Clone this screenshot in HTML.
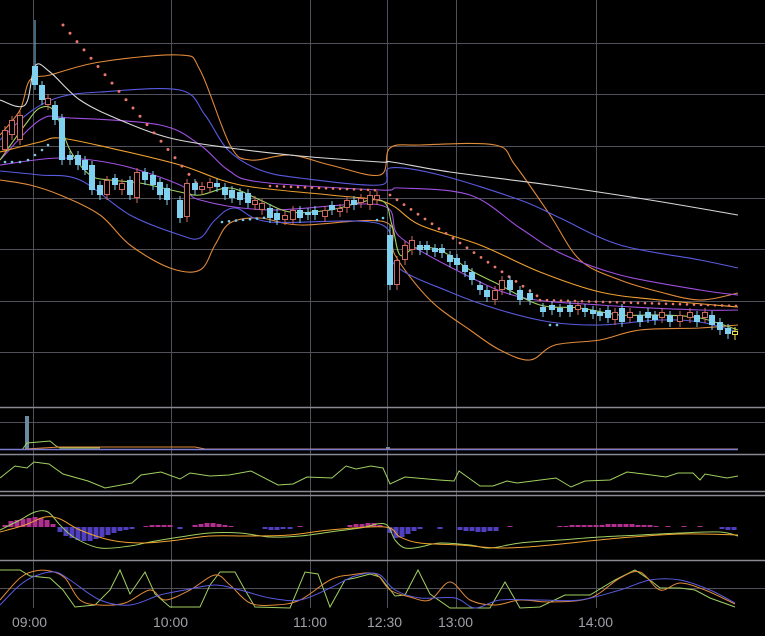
<!DOCTYPE html>
<html><head><meta charset="utf-8"><style>
html,body{margin:0;padding:0;background:#000;width:765px;height:636px;overflow:hidden}
svg{display:block}
text{font-family:"Liberation Sans",sans-serif;font-size:14px;fill:#a0a0a8}
</style></head><body>
<svg id="s" width="765" height="636" viewBox="0 0 765 636" xmlns="http://www.w3.org/2000/svg">
<g stroke="#50505a" stroke-width="1" fill="none">
<path d="M0 43.5H765M0 94.5H765M0 146.5H765M0 198.5H765M0 249.5H765M0 301.5H765M0 352.5H765"/>
<path d="M33.5 0V608M171.5 0V608M310.5 0V608M387.5 0V608M456.5 0V608M596.5 0V608"/>
<path d="M0 422.5H765M0 588.5H765"/>
</g>
<g stroke="#8a8a94" stroke-width="1.5" fill="none">
<path d="M0 407.5H765M0 454.5H765M0 491.5H765M0 495.5H765M0 560.5H765"/>
</g>
<g fill="none" stroke-width="1.1">
<polyline class="sm" stroke="#e08a3a" points="0,135 20,110 30,80 50,75 100,62 180,55 200,70 230,145 250,160 290,155 330,165 380,175 390,148 420,145 495,145 515,165 550,215 580,260 620,280 660,292 700,300 738,293"/>
<polyline class="sm" stroke="#e08a3a" points="0,180 30,185 60,195 100,215 130,245 170,268 200,270 215,245 230,223 260,218 300,225 385,222 395,255 430,300 470,330 500,350 530,360 555,345 600,340 640,330 700,328 738,325"/>
<polyline class="sm" stroke="#5a5ae0" points="0,140 30,112 60,97 100,92 180,90 205,115 228,150 260,170 300,178 380,185 390,168 440,175 520,200 560,218 620,245 700,260 738,268"/>
<polyline class="sm" stroke="#5a5ae0" points="0,171 40,175 80,180 130,215 180,235 200,238 215,220 235,208 270,222 380,224 395,265 450,292 500,310 550,322 600,325 660,320 700,322 738,332"/>
<polyline class="sm" stroke="#a050e0" points="0,160 40,120 70,118 160,125 200,145 228,170 260,182 380,190 400,188 470,195 520,228 560,253 620,275 700,290 738,295"/>
<polyline class="sm" stroke="#a050e0" points="0,165 60,158 120,165 180,185 200,200 270,210 380,205 400,237 460,272 520,297 600,305 700,310 738,310"/>
<polyline class="sm" stroke="#d8d8d8" points="0,100 25,105 35,66 50,72 80,100 120,120 170,138 230,148 300,156 380,162 392,162 450,172 550,185 650,200 738,215"/>
<polyline class="sm" stroke="#f0a030" points="0,152 40,142 60,138 110,148 180,165 240,185 330,195 385,202 420,225 480,245 540,272 600,292 660,300 738,307"/>
<polyline class="sm" stroke="#a0d060" points="0,160 25,125 40,108 55,112 70,150 90,175 110,180 140,183 180,192 200,195 230,188 260,200 290,212 330,210 380,200 392,225 400,255 415,248 440,250 470,270 500,285 540,305 580,308 620,315 660,315 700,318 738,330"/>
</g>
<g id="dots" fill="#e8786a"></g>
<g id="bdots" fill="#7ac8e8"></g>
<g id="cand"></g>
<g id="hist"></g>
<rect x="25" y="416" width="4" height="34" fill="#6a8aa0"/>
<rect x="386" y="447" width="4" height="3" fill="#6a8aa0"/>
<polyline fill="none" stroke="#a0d060" stroke-width="1" points="22,450 27,443 50,441 56,446 60,448 100,448"/>
<polyline fill="none" stroke="#e08a3a" stroke-width="1" points="25,449 60,447 195,447 205,449 738,449"/>
<path d="M0 449.5H738" stroke="#7a7ad0" stroke-width="1.5"/>
<polyline fill="none" stroke="#a0d060" stroke-width="1" points="0,478 15,466 27,468 34,462 49,464 63,474 88,481 105,488 132,483 141,475 161,472 180,479 190,473 210,476 229,475 251,471 278,485 293,484 307,477 332,478 346,466 356,469 371,466 383,468 390,484 405,477 439,480 454,481 459,471 480,486 493,486 507,481 517,483 556,478 571,487 585,481 610,480 627,472 644,474 666,477 678,473 693,473 700,480 705,474 727,478 738,476"/>
<polyline class="sm" fill="none" stroke="#a0d060" stroke-width="1" points="0,530 20,520 35,512 48,512 60,525 75,538 100,548 130,546 150,542 180,537 210,533 240,533 270,537 300,536 330,532 360,528 385,524 395,540 405,548 420,547 440,543 470,545 490,548 520,543 560,540 600,537 640,535 680,533 720,532 738,536"/>
<polyline class="sm" fill="none" stroke="#f0a030" stroke-width="1" points="0,532 25,525 45,517 60,519 80,530 110,540 140,543 170,541 210,536 250,536 290,535 330,530 385,527 400,537 420,543 460,545 500,548 540,546 580,542 620,538 680,534 738,535"/>
<polyline fill="none" stroke="#a0d060" stroke-width="1" points="0,570 20,570 30,576 50,578 63,590 75,607 95,605 110,590 120,570 130,594 145,572 155,594 170,607 200,607 210,585 220,572 235,572 245,590 255,607 290,608 305,572 318,574 330,607 345,580 355,578 370,574 380,577 395,596 405,595 418,570 430,594 450,608 490,608 505,582 520,608 540,607 565,595 590,595 615,580 635,570 650,580 660,588 680,588 695,590 710,598 735,607"/>
<polyline class="sm" fill="none" stroke="#e08a3a" stroke-width="1" points="0,600 20,578 35,571 50,571 65,578 80,600 100,605 125,603 150,590 165,600 190,590 215,575 230,585 250,603 275,605 300,600 330,580 350,575 375,574 390,590 410,597 430,600 450,582 470,600 495,605 520,600 550,602 590,598 620,578 640,572 660,590 680,583 705,590 735,604"/>
<polyline class="sm" fill="none" stroke="#5a5ae0" stroke-width="1" points="0,605 20,585 35,576 55,572 70,580 100,600 130,605 160,595 185,590 215,585 240,590 270,598 300,600 330,588 355,576 378,574 395,590 420,598 455,598 475,608 500,600 540,600 580,600 620,590 650,580 680,580 710,590 735,603"/>
<text x="12" y="627">09:00</text>
<text x="153" y="627">10:00</text>
<text x="293" y="627">11:00</text>
<text x="367" y="627">12:30</text>
<text x="438" y="627">13:00</text>
<text x="578" y="627">14:00</text>
</svg>
<script>
var NS="http://www.w3.org/2000/svg";
function el(p,n,a){var e=document.createElementNS(NS,n);for(var k in a)e.setAttribute(k,a[k]);p.appendChild(e);return e;}
document.querySelectorAll('polyline.sm').forEach(function(pl){
var p=pl.getAttribute('points').trim().split(/\s+/).map(function(s){return s.split(',').map(Number);});
var d='M'+p[0][0]+' '+p[0][1];
for(var i=0;i<p.length-1;i++){var p0=p[i-1]||p[i],p1=p[i],p2=p[i+1],p3=p[i+2]||p2;
d+=' C'+(p1[0]+(p2[0]-p0[0])/6)+' '+(p1[1]+(p2[1]-p0[1])/6)+' '+(p2[0]-(p3[0]-p1[0])/6)+' '+(p2[1]-(p3[1]-p1[1])/6)+' '+p2[0]+' '+p2[1];}
var path=document.createElementNS(NS,'path');path.setAttribute('d',d);
['stroke','stroke-width','fill'].forEach(function(a){if(pl.getAttribute(a))path.setAttribute(a,pl.getAttribute(a));});
path.setAttribute('fill','none');pl.parentNode.replaceChild(path,pl);});
var c=[[5,130,150,'r'],[12,120,135,'r'],[20,115,140,'r'],[35,66,85,'b',20,90],[42,85,100,'b'],[48,98,105,'r'],[55,105,120,'b'],[62,118,160,'b'],[70,155,160,'b'],[78,155,165,'b'],[85,160,170,'b'],[92,165,190,'b'],[100,185,195,'b'],[107,180,195,'r'],[115,178,185,'b'],[122,183,190,'r'],[130,180,195,'b'],[137,172,198,'r'],[145,172,180,'b'],[153,175,185,'b'],[160,182,195,'b'],[167,188,200,'b'],[180,200,218,'b'],[187,183,217,'r'],[195,183,190,'b'],[202,186,190,'r'],[210,182,188,'r'],[217,183,187,'b'],[225,187,195,'b'],[232,190,198,'b'],[240,192,200,'b'],[248,193,203,'b'],[255,200,205,'r'],[262,203,210,'r'],[270,208,218,'b'],[277,213,220,'b'],[285,215,220,'r'],[293,210,220,'r'],[300,210,218,'b'],[308,212,215,'b'],[315,210,215,'b'],[325,210,217,'r'],[332,205,210,'b'],[340,208,212,'r'],[347,200,208,'r'],[354,200,205,'b'],[361,198,203,'r'],[370,195,205,'r'],[377,195,200,'r'],[390,235,285,'b',225,290],[397,260,285,'r'],[405,245,260,'r'],[412,240,250,'r'],[420,245,250,'b'],[427,245,250,'b'],[435,248,252,'b'],[442,248,253,'b'],[450,255,262,'b'],[457,258,265,'b'],[465,265,272,'b'],[472,272,280,'b'],[480,285,290,'b'],[487,290,297,'b'],[495,290,300,'r'],[502,280,290,'r'],[510,280,290,'b'],[520,290,300,'b'],[530,293,300,'b'],[543,307,312,'b'],[552,305,310,'b'],[560,308,312,'b'],[570,305,312,'b'],[578,305,310,'r'],[585,308,312,'b'],[593,310,314,'b'],[600,312,316,'b'],[608,310,318,'b'],[615,312,320,'r'],[622,308,322,'b'],[630,312,318,'r'],[640,315,322,'b'],[648,312,318,'b'],[655,315,320,'b'],[662,312,318,'r'],[670,315,322,'b'],[680,315,322,'r'],[690,312,318,'r'],[697,315,322,'b'],[705,312,318,'r'],[712,315,325,'b'],[720,322,330,'b'],[728,328,334,'b'],[735,331,335,'y']];
var g=document.getElementById('cand');
c.forEach(function(d){var x=d[0],t=d[1],b=d[2],col=d[3]=='b'?'#80d0f0':(d[3]=='r'?'#d06a60':'#e8e040');
var wt=d[4]||t-4,wb=d[5]||b+5;
el(g,'line',{x1:x,x2:x,y1:wt,y2:wb,stroke:col,'stroke-width':1});
if(d[3]=='b')el(g,'rect',{x:x-3,y:t,width:6,height:Math.max(2,b-t),fill:col});
else el(g,'rect',{x:x-2.5,y:t+.5,width:5,height:Math.max(2,b-t-1),fill:'#000',stroke:col,'stroke-width':1});});
var dg=document.getElementById('dots');
for(var i=0;i<20;i++){el(dg,'circle',{cx:63+i*7,cy:25+i*8.3,r:1.5});}
for(var x=270;x<380;x+=7)el(dg,'circle',{cx:x,cy:186+(x-270)*0.04,r:1.3});
for(var i=0;i<22;i++)el(dg,'circle',{cx:390+i*7,cy:195+i*4.8,r:1.4});
for(var x=540;x<740;x+=7)el(dg,'circle',{cx:x,cy:300+(x-540)*0.03,r:1.3});
var bg=document.getElementById('bdots');
[[5,162],[12,162],[20,162],[28,160],[35,155],[42,150],[48,145]].forEach(function(p){el(bg,'circle',{cx:p[0],cy:p[1],r:1.3});});
for(var x=222;x<268;x+=7)el(bg,'circle',{cx:x,cy:222-(x-222)*0.1,r:1.3});
[[377,220],[383,218],[550,325],[557,325]].forEach(function(p){el(bg,'circle',{cx:p[0],cy:p[1],r:1.3});});
var h=document.getElementById('hist');
var hv=[[5,-2],[11,-6],[17,-7],[23,-8],[29,-9],[35,-10],[41,-9],[47,-7],[53,-3],[60,5],[66,9],[72,11],[78,13],[84,14],[90,14],[96,12],[102,10],[108,8],[114,6],[120,4],[126,3],[132,2],[146,-1],[152,-2],[158,-2],[164,-2],[170,-2],[180,2],[195,-2],[201,-3],[207,-4],[213,-4],[219,-3],[225,-2],[231,-1],[265,2],[271,3],[277,3],[283,2],[290,2],[300,-1],[350,-2],[356,-3],[362,-3],[368,-4],[374,-4],[380,-2],[390,6],[396,11],[402,10],[408,7],[414,4],[420,2],[440,2],[460,3],[466,4],[472,4],[478,5],[484,5],[490,4],[496,4],[510,-1],[560,-1],[566,-1],[572,-2],[578,-2],[584,-2],[590,-2],[596,-2],[602,-2],[608,-3],[614,-3],[620,-3],[626,-3],[632,-3],[638,-2],[644,-2],[650,-2],[656,-1],[668,-1],[684,-1],[700,-1],[722,2],[728,3],[734,3]];
hv.forEach(function(d){var v=d[1];if(v<0)el(h,'rect',{x:d[0]-2.5,y:527+v,width:5,height:-v,fill:'#b03090'});else el(h,'rect',{x:d[0]-2.5,y:527,width:5,height:v,fill:'#5040c0'});});
</script>
</body></html>
